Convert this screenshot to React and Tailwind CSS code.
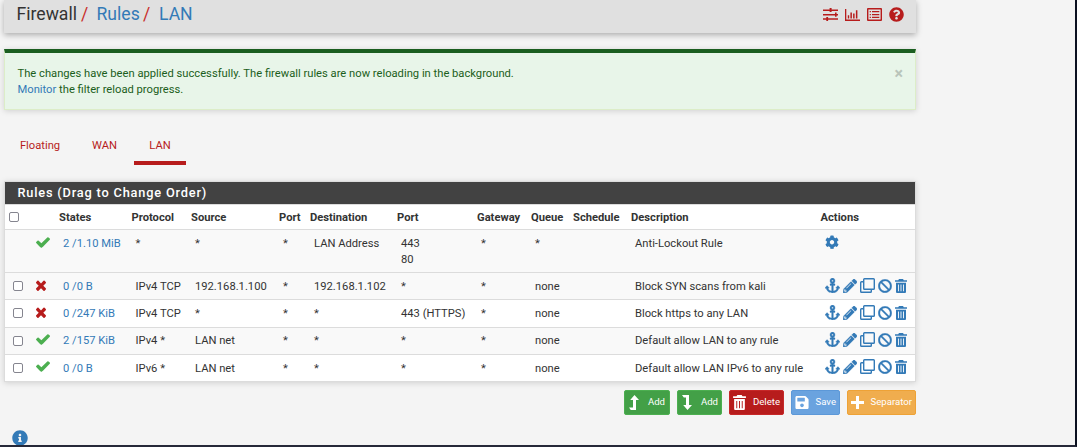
import { FaAnchor, FaPencilAlt, FaBan, FaCog, FaSave, FaQuestionCircle, FaInfoCircle } from "react-icons/fa";

const CHECK = "M1671 566q0 40-28 68l-724 724-136 136q-28 28-68 28t-68-28l-136-136-362-362q-28-28-28-68t28-68l136-136q28-28 68-28t68 28l294 295 656-657q28-28 68-28t68 28l136 136q28 28 28 68z";
const TIMES = "M1490 1322q0 40-28 68l-136 136q-28 28-68 28t-68-28l-294-294-294 294q-28 28-68 28t-68-28l-136-136q-28-28-28-68t28-68l294-294-294-294q-28-28-28-68t28-68l136-136q28-28 68-28t68 28l294 294 294-294q28-28 68-28t68 28l136 136q28 28 28 68t-28 68l-294 294 294 294q28 28 28 68z";

function Check() {
  return (
    <svg viewBox="121 334 1550 1188" className="block h-[11px] w-[14px]" fill="#4caf50"><path d={CHECK} /></svg>
  );
}
function Times() {
  return (
    <svg viewBox="302 302 1188 1252" preserveAspectRatio="none" className="block h-[11px] w-[10px]" fill="#b71c1c"><path d={TIMES} /></svg>
  );
}
function Sliders() {
  return (
    <svg viewBox="0 0 15 13" className="h-[13px] w-[15px]" fill="#b71c1c">
      <path d="M0 1.4h15v1.5H0zM0 5.9h15v1.5H0zM0 10.3h15v1.5H0zM6.6 0h2v4.1h-2zM12 4.6h1.6v4.2H12zM3.3 8.9h1.8V13H3.3z" />
    </svg>
  );
}
function Bars() {
  return (
    <svg viewBox="0 0 15 12" className="h-[12px] w-[15px]" fill="#b71c1c">
      <path d="M0 0h1.3v10.4H15V12H0zM2.8 6.2h1.4v3.2H2.8zM5.4 3.4h1.5v6H5.4zM8.1 4.4h1.5v5H8.1zM10.9 1.3h1.5v8.1h-1.5z" />
    </svg>
  );
}
function ListIcon() {
  return (
    <svg viewBox="0 0 15 13" className="h-[13px] w-[15px]" fill="#b71c1c">
      <path fillRule="evenodd" d="M1 0h13a1 1 0 0 1 1 1v11a1 1 0 0 1-1 1H1a1 1 0 0 1-1-1V1a1 1 0 0 1 1-1zM1.4 1.4v10.2h12.2V1.4z" />
      <path d="M2.7 2.9h1.2v1.3H2.7zM5 2.9h7.3v1.3H5zM2.7 5.9h1.2v1.3H2.7zM5 5.9h7.3v1.3H5zM2.7 8.8h1.2v1.3H2.7zM5 8.8h7.3v1.3H5z" />
    </svg>
  );
}
function Clone() {
  return (
    <svg viewBox="0 0 15 15" className="block h-[15px] w-[15px]" fill="none" stroke="currentColor" strokeWidth="1.4">
      <rect x="3.7" y=".7" width="10.6" height="10.6" rx=".8" />
      <path d="M3.5 3.7H1.5a.8.8 0 0 0-.8.8v9a.8.8 0 0 0 .8.8h9a.8.8 0 0 0 .8-.8v-2" />
    </svg>
  );
}
function Trash({ className }) {
  return (
    <svg viewBox="0 0 12 14" className={className} fill="currentColor">
      <path fillRule="evenodd" d="M4 0h4l.8 1.2H12v1.6H0V1.2h3.2zM1 3.7h10V13a1 1 0 0 1-1 1H2a1 1 0 0 1-1-1zM3 5.5v6.8h.9V5.5zM5.55 5.5v6.8h.9V5.5zM8.1 5.5v6.8H9V5.5z" />
    </svg>
  );
}

const columns = ["w-[23px]", "w-[27px]", "w-[72.5px]", "w-[59.5px]", "w-[88px]", "w-[31px]", "w-[87px]", "w-[80px]", "w-[54px]", "w-[42px]", "w-[58px]", "w-[189.5px]", "w-[98.5px]"];
const heads = ["", "States", "Protocol", "Source", "Port", "Destination", "Port", "Gateway", "Queue", "Schedule", "Description", "Actions"];
const rules = [
  { lockout: true, pass: true, h: "h-[43px]", cells: ["2 /1.10 MiB", "*", "*", "*", "LAN Address", "443\n80", "*", "*", "", "Anti-Lockout Rule"] },
  { h: "h-[27px]", cells: ["0 /0 B", "IPv4 TCP", "192.168.1.100", "*", "192.168.1.102", "*", "*", "none", "", "Block SYN scans from kali"] },
  { h: "h-[28px]", cells: ["0 /247 KiB", "IPv4 TCP", "*", "*", "*", "443 (HTTPS)", "*", "none", "", "Block https to any LAN"] },
  { pass: true, h: "h-[27px]", cells: ["2 /157 KiB", "IPv4 *", "LAN net", "*", "*", "*", "*", "none", "", "Default allow LAN to any rule"] },
  { pass: true, h: "h-[27px]", cells: ["0 /0 B", "IPv6 *", "LAN net", "*", "*", "*", "*", "none", "", "Default allow LAN IPv6 to any rule"] },
];

function Box() {
  return <input type="checkbox" className="block h-[10px] w-[10px] appearance-none rounded-[2px] border border-[#85858f] bg-white" />;
}

function RuleRow({ rule, shade, textPad, statePad, actionPad }) {
  const cell = "border-t border-[#dcdcdc] pl-2 align-top";
  return (
    <tr className={`${rule.h} ${shade ? "bg-[#f9f9f9]" : "bg-white"}`}>
      <td className={`${cell} pt-2`}>{!rule.lockout && <Box />}</td>
      <td className={`${cell} ${statePad}`}>{rule.pass ? <Check /> : <Times />}</td>
      {rule.cells.map((text, i) => (
        <td key={i} className={`${cell} ${textPad} whitespace-pre ${i === 0 ? "text-[#337ab7]" : ""}`}>{text}</td>
      ))}
      <td className={`${cell} ${actionPad} text-[#337ab7]`}>
        {rule.lockout ? (
          <FaCog className="block h-[14.5px] w-[14px]" />
        ) : (
          <div className="flex items-center">
            <FaAnchor preserveAspectRatio="none" stroke="currentColor" strokeWidth={12} className="h-[15px] w-[15px]" />
            <FaPencilAlt stroke="currentColor" strokeWidth={8} className="ml-[3px] h-[14px] w-[14px]" />
            <span className="ml-[3px]"><Clone /></span>
            <FaBan stroke="currentColor" strokeWidth={10} className="ml-[3px] h-[14px] w-[14px]" />
            <Trash className="ml-[3px] h-[14px] w-[12px]" />
          </div>
        )}
      </td>
    </tr>
  );
}

export default function App() {
  return (
    <div className="h-[447px] w-[1077px] overflow-hidden border-r-2 border-b-2 border-[#0b1020] border-b-[#262838] bg-[#f4f4f4] pl-1 font-['Roboto',sans-serif] text-[11.2px] leading-4 text-[#333]">
      <header className="flex h-[33px] w-[912px] items-center justify-between bg-[#e0e0e0] pr-3 pb-1 pl-[12.5px] shadow-[0_2px_6px_rgba(0,0,0,0.3)]">
        <h1 className="flex pb-0.5 text-[17.6px] leading-6">
          <span className="w-[64.5px]">Firewall</span>
          <span className="w-[15.5px] text-[#c9302c]">/</span>
          <a className="w-[46.5px] text-[#337ab7]">Rules</a>
          <span className="w-[16px] text-[#c9302c]">/</span>
          <a className="text-[#337ab7]">LAN</a>
        </h1>
        <div className="flex items-center gap-[7px]">
          <Sliders />
          <Bars />
          <ListIcon />
          <FaQuestionCircle className="h-[15px] w-[15px] text-[#b71c1c]" />
        </div>
      </header>

      <section className="mt-4 flex h-[61px] w-[912px] justify-between border border-t-4 border-[#dcedc8] border-t-[#1b5e20] bg-[#e8f5e9] pt-[13px] pr-3 pl-[12.5px] text-[#1b5e20] shadow-[0_1px_6px_rgba(0,0,0,0.15)]">
        <p>
          The changes have been applied successfully. The firewall rules are now reloading in the background.<br />
          <a className="text-[#337ab7]">Monitor</a> the filter reload progress.
        </p>
        <button className="h-4 text-[16px] leading-4 font-bold text-[#b9c4ba]">×</button>
      </section>

      <nav className="mt-[17px] flex h-[38px] text-[#b71c1c]">
        <a className="w-[72px] pt-[11px] text-center">Floating</a>
        <a className="w-[57px] pt-[11px] text-center">WAN</a>
        <a className="ml-px w-[52px] border-b-4 border-[#b71c1c] pt-[11px] text-center">LAN</a>
      </nav>

      <section className="mt-4 w-[912px] border border-[#dcdcdc] shadow-[0_1px_6px_rgba(0,0,0,0.15)]">
        <h2 className="h-[22px] bg-[#424242] pl-[12.5px] text-[12.8px] leading-[22px] font-medium tracking-[0.8px] text-white">Rules (Drag to Change Order)</h2>
        <table className="w-[910px] table-fixed border-separate border-spacing-0">
          <colgroup>{columns.map((c, i) => <col key={i} className={c} />)}</colgroup>
          <thead>
            <tr className="h-[25px] bg-white">
              <th className="border-t border-[#dcdcdc] pl-1"><Box /></th>
              {heads.map((h, i) => <th key={i} className="border-t border-[#dcdcdc] pt-px pl-1 text-left font-bold whitespace-nowrap">{h}</th>)}
            </tr>
          </thead>
          <tbody>
            {rules.map((r, i) => (
              <RuleRow
                key={i}
                rule={r}
                shade={i === 0 || i === 1 || i === 3}
                textPad={i === 3 ? "pt-[5px]" : "pt-[6px]"}
                statePad={i > 2 ? "pt-[6px]" : "pt-[7px]"}
                actionPad={i > 2 ? "pt-[4px]" : "pt-[5px]"}
              />
            ))}
          </tbody>
        </table>
      </section>

      <div className="mt-2 flex h-[25px] w-[912px] justify-end gap-[7px] text-[9.6px] text-white">
        <button className="flex w-[46px] items-center justify-between rounded-[2px] border border-[#4caf50] bg-[#43a047] px-1">
          <svg viewBox="0 0 10 15" className="h-[15px] w-[10px]" fill="currentColor"><path d="M0 12.5h4V5H1.2L5.5 0 10 5H7v10H1.8z" /></svg>
          <span className="pb-0.5">Add</span>
        </button>
        <button className="flex w-[45px] items-center justify-between rounded-[2px] border border-[#4caf50] bg-[#43a047] pr-[3px] pl-1">
          <svg viewBox="0 0 10 15" className="h-[15px] w-[10px]" fill="currentColor"><path d="M0 0h7v10h3l-4.5 5-4.3-5H4V2.5H1.8z" /></svg>
          <span className="pb-0.5">Add</span>
        </button>
        <button className="flex w-[55px] items-center justify-between rounded-[2px] border border-[#c62828] bg-[#b71c1c] px-[3px]">
          <Trash className="h-[15px] w-[13px]" />
          <span className="pb-0.5">Delete</span>
        </button>
        <button className="flex w-[49px] items-center justify-between rounded-[2px] border border-[#5c98d8] bg-[#6aa3df] px-[3px]">
          <FaSave className="h-[15px] w-[14px]" />
          <span className="pb-0.5">Save</span>
        </button>
        <button className="flex w-[69px] items-center justify-between rounded-[2px] border border-[#eea236] bg-[#f0ad4e] px-[3px]">
          <svg viewBox="0 0 13 13" className="h-[13px] w-[13px]" fill="currentColor"><path d="M5 0h3v5h5v3H8v5H5V8H0V5h5z" /></svg>
          <span className="pb-0.5">Separator</span>
        </button>
      </div>
      <FaInfoCircle className="mt-[15px] ml-2 h-4 w-4 text-[#337ab7]" />
    </div>
  );
}
